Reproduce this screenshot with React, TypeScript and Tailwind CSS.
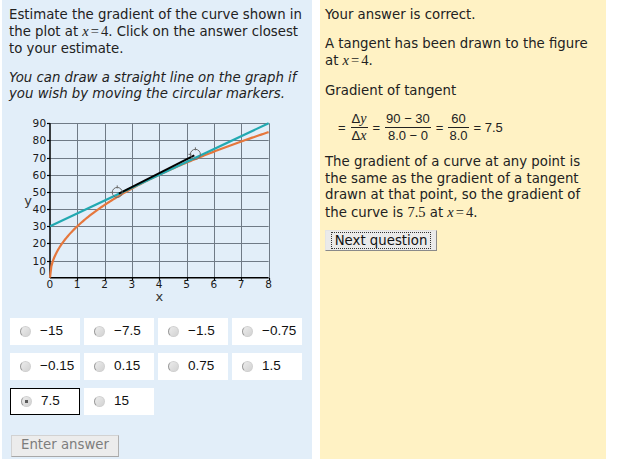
import React from 'react'

const X0 = 41
const Y0 = 167.7
const SX = 27.33
const SY = 1.716
const px = (x: number) => X0 + x * SX
const py = (y: number) => Y0 - y * SY
const crisp = (v: number) => Math.round(v) + 0.5

const options = ['−15', '−7.5', '−1.5', '−0.75', '−0.15', '0.15', '0.75', '1.5', '7.5', '15']

function Xeq4() {
  return (
    <span className="font-['Liberation_Serif',serif] text-[14.5px]">
      <i>x</i>
      <span className="mx-[2px]">=</span>4
    </span>
  )
}

function Radio({ checked }: { checked?: boolean }) {
  return (
    <span className="relative inline-block h-[11px] w-[11px] shrink-0 rounded-full border border-[#d0d0d0] border-l-[#9a9a9a] bg-gradient-to-br from-[#ececec] to-[#d2d2d2]">
      {checked && <span className="absolute left-[3px] top-[3px] h-[3px] w-[3px] bg-[#5a5a5a]" />}
    </span>
  )
}

function Marker({ x, y }: { x: number; y: number }) {
  const cx = px(x)
  const cy = py(y)
  return (
    <g stroke="#6a6a6a" strokeWidth={1} fill="none">
      <circle cx={cx} cy={cy} r={5} />
      <line x1={cx} y1={cy - 7} x2={cx} y2={cy - 4} />
      <line x1={cx - 7} y1={cy} x2={cx - 4} y2={cy} />
    </g>
  )
}

function Chart() {
  const curve: string[] = []
  for (let i = 0; i <= 160; i++) {
    const x = (i / 160) * 8
    curve.push(`${px(x).toFixed(2)},${py(30 * Math.sqrt(x)).toFixed(2)}`)
  }
  const xs = [1, 2, 3, 4, 5, 6, 7, 8]
  const ys = [10, 20, 30, 40, 50, 60, 70, 80, 90]
  return (
    <svg width={300} height={195} className="mt-[7px] block">
      {xs.map(i => (
        <line key={'v' + i} x1={crisp(px(i))} y1={py(90)} x2={crisp(px(i))} y2={Y0} stroke="#6f7a86" strokeWidth={1} />
      ))}
      {ys.map(v => (
        <line key={'h' + v} x1={X0} y1={crisp(py(v))} x2={px(8)} y2={crisp(py(v))} stroke="#6f7a86" strokeWidth={1} />
      ))}
      {ys.map(v => (
        <line key={'t' + v} x1={X0 - 3} y1={crisp(py(v))} x2={X0} y2={crisp(py(v))} stroke="#000" strokeWidth={1.2} />
      ))}
      {xs.map(i => (
        <line key={'u' + i} x1={crisp(px(i))} y1={Y0} x2={crisp(px(i))} y2={Y0 + 3} stroke="#000" strokeWidth={1.2} />
      ))}
      <line x1={X0} y1={py(90)} x2={X0} y2={Y0} stroke="#000" strokeWidth={1.5} />
      <line x1={X0} y1={Y0} x2={px(8)} y2={Y0} stroke="#000" strokeWidth={1.5} />

      <g fontFamily="'DejaVu Sans', sans-serif" fontSize={10.5} fill="#1a1a1a" letterSpacing={0.3}>
        {ys.map(v => (
          <text key={'yl' + v} x={X0 - 3.5} y={py(v) + 4} textAnchor="end">{v}</text>
        ))}
        <text x={X0 - 4} y={165} textAnchor="end" fontSize={10}>0</text>
        <text x={X0} y={178} textAnchor="middle">0</text>
        {xs.map(i => (
          <text key={'xl' + i} x={px(i)} y={178} textAnchor="middle">{i}</text>
        ))}
      </g>
      <g fontFamily="'DejaVu Sans', sans-serif" fontSize={13} fill="#333">
        <text x={X0 - 22} y={95} textAnchor="middle">y</text>
        <text x={px(4)} y={191} textAnchor="middle">x</text>
      </g>

      <polyline points={curve.join(' ')} fill="none" stroke="#e5773d" strokeWidth={2.2} />
      <line x1={px(0)} y1={py(30)} x2={px(8)} y2={py(90)} stroke="#22a9b1" strokeWidth={2.2} />
      <line x1={px(2.52)} y1={py(49)} x2={px(5.28)} y2={py(71.3)} stroke="#000" strokeWidth={2} />
      <Marker x={2.46} y={49.7} />
      <Marker x={5.32} y={71.9} />
    </svg>
  )
}

function Frac({ top, bottom }: { top: React.ReactNode; bottom: React.ReactNode }) {
  return (
    <span className="mx-[5px] inline-flex flex-col items-center">
      <span className="px-[1px] leading-[16px]">{top}</span>
      <span className="h-px w-full bg-[#222]" />
      <span className="px-[1px] leading-[16px]">{bottom}</span>
    </span>
  )
}

export default function App() {
  return (
    <div className="flex h-[459px] w-[617px] bg-white font-['DejaVu_Sans',sans-serif] text-[13.3px] leading-[16.4px] text-[#222]">
      {/* Question */}
      <div className="ml-[2px] flex w-[310px] flex-col bg-[#e2eef9] pl-[7px] pt-[7px]">
        <p className="whitespace-nowrap">
          Estimate the gradient of the curve shown in<br />
          the plot at <Xeq4 />. Click on the answer closest<br />
          to your estimate.
        </p>
        <p className="mt-[12.6px] whitespace-nowrap italic">
          You can draw a straight line on the graph if<br />
          you wish by moving the circular markers.
        </p>
        <Chart />

        <div className="ml-[1px] mt-[13px] grid w-[292px] grid-cols-[repeat(4,70px)] gap-x-[4px] gap-y-[8px]">
          {options.map(o => (
            <label
              key={o}
              className={`flex h-[27px] items-center gap-[9px] bg-white pl-[10px] font-['Liberation_Sans',sans-serif] text-[13.5px] text-[#111] ${o === '7.5' ? 'border border-black pl-[9px]' : ''}`}
            >
              <Radio checked={o === '7.5'} />
              {o}
            </label>
          ))}
        </div>

        <button className="ml-[2px] mt-[20px] h-[22px] w-[108px] border border-[#d2d2d2] border-b-[#a8a8a8] border-r-[#b0b0b0] bg-[#ececec] text-[13.3px] text-[#7d7d7d]">
          Enter answer
        </button>
      </div>

      {/* Feedback */}
      <div className="ml-[8px] flex w-[286px] flex-col bg-[#fff2c4] pl-[5px] pt-[7px]">
        <p>Your answer is correct.</p>
        <p className="mt-[12.6px] whitespace-nowrap">
          A tangent has been drawn to the figure<br />
          at <Xeq4 />.
        </p>
        <p className="mt-[13.4px]">Gradient of tangent</p>

        <div className="ml-[13px] mt-[11.8px] flex items-center font-['Liberation_Sans',sans-serif] text-[13px]">
          <span>=</span>
          <Frac
            top={<>Δ<i className="font-['Liberation_Serif',serif] text-[14px]">y</i></>}
            bottom={<>Δ<i className="font-['Liberation_Serif',serif] text-[14px]">x</i></>}
          />
          <span>=</span>
          <Frac top="90 − 30" bottom="8.0 − 0" />
          <span>=</span>
          <Frac top="60" bottom="8.0" />
          <span>= 7.5</span>
        </div>

        <p className="mt-[10px] whitespace-nowrap">
          The gradient of a curve at any point is<br />
          the same as the gradient of a tangent<br />
          drawn at that point, so the gradient of<br />
          the curve is <span className="font-['Liberation_Serif',serif] text-[14.5px]">7.5</span> at <Xeq4 />.
        </p>

        <div className="mt-[9px]">
          <button className="h-[21px] w-[112px] border border-[#e4e4e4] border-b-[#8a8a8a] border-r-[#8a8a8a] bg-[#eaeaea] px-[5px] text-[13.3px] text-[#111]">
            <span className="block border border-dotted border-[#333] leading-[15px]">Next question</span>
          </button>
        </div>
      </div>
    </div>
  )
}
